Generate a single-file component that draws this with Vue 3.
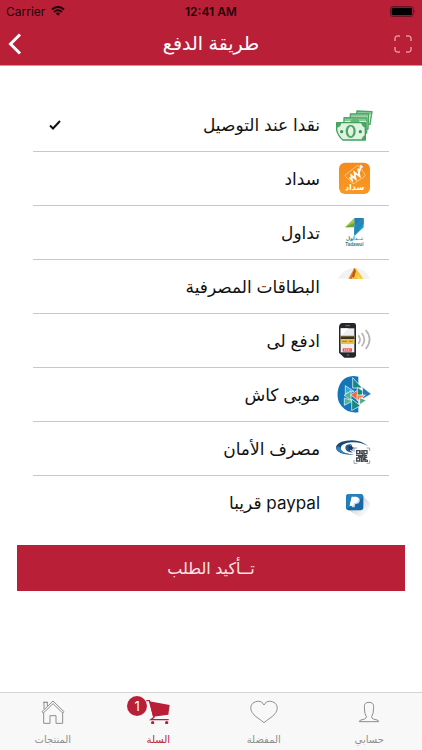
<script setup>
import { ref } from 'vue'

const methods = [
  { id: 'cash', label: 'نقدا عند التوصيل' },
  { id: 'sadad', label: 'سداد' },
  { id: 'tadawul', label: 'تداول' },
  { id: 'cards', label: 'البطاقات المصرفية' },
  { id: 'edfali', label: 'ادفع لى' },
  { id: 'mobicash', label: 'موبى كاش' },
  { id: 'aman', label: 'مصرف الأمان' },
  { id: 'paypal', label: 'paypal قريبا' },
]
const selected = ref('cash')

const tabs = [
  { id: 'account', label: 'حسابي' },
  { id: 'favourites', label: 'المفضلة' },
  { id: 'cart', label: 'السلة', badge: 1 },
  { id: 'products', label: 'المنتجات' },
]
const activeTab = ref('cart')
</script>

<template>
  <div class="screen" dir="rtl">
    <header class="header">
      <div class="status" dir="ltr">
        <span class="carrier">
          Carrier
          <svg class="wifi" viewBox="0 0 28 20" aria-hidden="true">
            <path d="M2 7Q14-3 26 7" /><path d="M6 12Q14 5 22 12" /><path class="dot" d="M9.500 15Q14 11 18.500 15L14 19.500z" />
          </svg>
        </span>
        <span class="clock">12:41 AM</span>
        <svg class="battery" viewBox="0 0 78 33" aria-hidden="true">
          <rect x="1.500" y="1.500" width="68" height="30" rx="7" fill="none" stroke="#5c1020" stroke-width="2.500" />
          <rect x="5" y="5" width="61" height="23" rx="4" fill="#000" />
          <path d="M73 12q5 4 0 9z" fill="#5c1020" />
        </svg>
      </div>
      <div class="nav">
        <button class="icon-button" type="button" aria-label="مسح">
          <svg class="scan" viewBox="0 0 18 18"><path d="M1 6V3q0-2 2-2h3M12 1h3q2 0 2 2v3M17 12v3q0 2-2 2h-3M6 17H3q-2 0-2-2v-3" /></svg>
        </button>
        <h1>طريقة الدفع</h1>
        <button class="icon-button back" type="button" aria-label="رجوع">
          <svg class="chevron" viewBox="0 0 14 22"><path d="M12 1.500 2.500 11l9.500 9.500" /></svg>
        </button>
      </div>
    </header>

    <main class="content">
      <div class="methods" role="radiogroup" aria-label="طريقة الدفع">
        <label v-for="m in methods" :key="m.id" class="method">
          <svg class="logo" viewBox="0 0 120 120" aria-hidden="true">
            <g v-if="m.id === 'cash'" stroke-linejoin="round">
              <g stroke="#4ba765" stroke-width="4" fill="#d9eedc">
                <path d="M66 18 111 20 105 58 60 56z" />
                <path d="M46 27 101 26 99 72 46 72z" />
                <path d="M27 38 96 39 95 84 26 84z" />
              </g>
              <path d="M66 18l45 2-1 8-45-1zM46 27h55v8H46zM27 38l69 1v9H27z" fill="#4ba765" opacity=".55" />
              <ellipse cx="60" cy="49" rx="13" ry="8" fill="#68b57d" />
              <path d="M5 53h86v52H24Q10 94 5 76z" fill="#e0f2e2" stroke="#42a05c" stroke-width="4" />
              <path d="M5 53h14Q18 66 5 68zM91 53H78q3 12 13 15zM91 105H79q3-12 12-14z" fill="#4ba765" />
              <ellipse cx="47" cy="79" rx="15" ry="20" fill="#4ba765" />
              <path d="M47 64q10 5 8 18l-3 9q-5 5-10 0l-3-9q-1-13 8-18" fill="#e5f3e5" />
              <circle cx="20" cy="80" r="5" fill="#389653" /><circle cx="76" cy="80" r="5" fill="#389653" />
            </g>
            <g v-else-if="m.id === 'sadad'">
              <defs><linearGradient id="orange" x2="0" y2="1"><stop stop-color="#f48b1d" /><stop offset="1" stop-color="#fb9822" /></linearGradient></defs>
              <rect x="12" y="11" width="93" height="94" rx="18" fill="url(#orange)" />
              <path d="M33 46 65 21q4-3 8 0l16 24q3 5-2 9L58 73q-5 3-8-2L31 52q-2-3 2-6z" fill="none" stroke="#ffe2b4" stroke-width="2" />
              <path d="m43 56 8 8-2-15 13 11-4-20 16 12-5-23M70 49l8-28 5 4" fill="none" stroke="#fff" stroke-width="5" />
              <text x="59" y="94" class="sadad-text">سداد</text>
            </g>
            <g v-else-if="m.id === 'tadawul'">
              <path d="M30 43 58 15v14L43 43z" fill="#a1c83b" /><path d="M30 43 58 29v14z" fill="#66a63b" />
              <path d="M58 15h28L58 43z" fill="#287dac" /><path d="M86 15v28L58 69V43z" fill="#18a1ca" /><path d="m58 43 28-28v16L58 69z" fill="#2287b9" />
              <text x="58" y="80" class="tadawul-arabic">تــداول</text>
              <text x="58" y="100" class="tadawul-latin" direction="ltr">Tadawul</text>
            </g>
            <g v-else-if="m.id === 'cards'">
              <path d="M7 35Q29 3 60 2q30 1 45 33z" fill="#f2f2f2" />
              <path d="M40 35 58 3l18 32z" fill="#dc842c" /><path d="M49 35 58 3h4l23 32z" fill="#f8c72b" />
              <path d="M50 29 58 3l5 9-7 23H46z" fill="#bb5629" /><path d="m53 30 6 5H49zM69 25l7 10h-9z" fill="#f6df6c" />
            </g>
            <g v-else-if="m.id === 'edfali'">
              <path d="M23 6h34q6 0 6 7v90q0 7-7 7H28L12 95V20Q12 6 23 6z" fill="#25262b" />
              <path d="M17 22h41v72H17z" fill="#f0eff0" /><path d="M17 22h24L17 44z" fill="#fff" />
              <path d="M17 43h41v26H17z" fill="#eabf47" /><path d="M17 46h41v8H17z" fill="#363133" />
              <path d="M21 61h15M42 61h11" stroke="#a97b26" stroke-width="3" /><path d="M23 82h28v10H23z" fill="#ed4d50" />
              <path d="M27 87h19" stroke="#fff" stroke-width="3" stroke-dasharray="4 2" /><path d="M31 14h14M35 102h8" stroke="#777" stroke-width="3" />
              <path d="M70 43q10 13 0 26M80 36q16 20 0 40M92 27q24 28 0 57" fill="none" stroke="#b7b4ad" stroke-width="5" />
            </g>
            <g v-else-if="m.id === 'mobicash'">
              <path d="M70 5v107Q39 116 20 94 5 77 8 50 15 5 54 3q9 0 16 2z" fill="#1476b9" />
              <g stroke="#fff" stroke-width="2">
                <path d="M53 8v31h29z" fill="#168a81" /><path d="M31 32v24l26-7z" fill="#31a8df" />
                <path d="m27 61 21-14v28z" fill="#4cb592" /><path d="m47 60 26-19v38z" fill="#ed6841" />
                <path d="m67 37 28 18-28 9z" fill="#168a81" /><path d="m82 36 27 21-26 15z" fill="#217bb9" />
                <path d="m66 60 25 0-24 18z" fill="#f28147" /><path d="M28 69v22l25-13z" fill="#49b990" />
                <path d="M50 72 76 92 50 107z" fill="#168a81" /><path d="M74 68v21l20-13z" fill="#4bac89" />
              </g>
            </g>
            <g v-else-if="m.id === 'aman'">
              <path d="M100 52Q73 28 34 35 2 40 3 58q5 21 55 19Q17 74 17 57 19 43 48 40q27-3 52 12z" fill="#174979" />
              <path d="M3 57q4 18 55 20Q17 74 17 57q-8-9-14 0z" fill="#3583ba" />
              <path d="M50 46q-20-2-19 12 3 13 23 13-12-6-10-13 0-8 6-12z" fill="#245b8b" /><path d="m44 52 6-4 2 6 6 3-6 3 1 6-7-4-6 2 2-7-5-4z" fill="#183c66" />
              <rect x="62" y="62" width="37" height="37" fill="#fff" />
              <g fill="none" stroke="#444850" stroke-width="4"><path d="M65 65h9v9h-9zM87 65h9v9h-9zM65 87h9v9h-9z" /><path d="M78 64v9h5v6h-8v5h9v-6h5v7h8M63 79h8v4h8v14h5v-9h6v9h7v-5M80 65h4v6M89 80h7M86 86v6h9" /></g>
              <path d="M57 68V57h10M95 57h9v9M57 93v10h10M95 103h9v-9" fill="none" stroke="#60779a" stroke-width="2" />
            </g>
            <g v-else>
              <defs><linearGradient id="shade" x2="1" y2="1"><stop offset=".3" stop-color="#c9ced3" /><stop offset=".85" stop-color="#fff" /></linearGradient></defs>
              <path d="m83 38 23 23q-3 27-31 42L38 80z" fill="url(#shade)" />
              <rect x="33" y="33" width="52" height="49" rx="9" fill="#1769a6" /><path d="M33 42q0-9 9-9h34q9 0 9 9L35 79z" fill="#277fbc" />
              <path d="M51 42h15q11 3 8 14-3 8-13 7l-2 10h-9l1-5h-7z" fill="#b9d7ef" /><path d="M50 41h14q9 3 6 12-3 8-13 7l-2 8H44z" fill="#fff" />
            </g>
          </svg>
          <span class="name">{{ m.label }}</span>
          <input v-model="selected" class="choice" type="radio" name="method" :value="m.id" />
          <svg class="tick" viewBox="0 0 12 10" aria-hidden="true"><path d="M1 5.500 4 8.500 11 1" /></svg>
        </label>
      </div>
      <button class="confirm" type="button">تــأكيد الطلب</button>
    </main>

    <nav class="tabs">
      <button v-for="t in tabs" :key="t.id" type="button" class="tab" :class="{ active: t.id === activeTab }" @click="activeTab = t.id">
        <span class="tab-icon">
          <svg viewBox="0 0 84 75" aria-hidden="true">
            <path v-if="t.id === 'account'" d="M32 48q4 5 1 9-3 4-15 6-5 1-5 5h58q0-4-5-5-12-2-15-6-3-4 1-9 3-5 3-12l1-13q0-13-14-13T28 23l1 13q0 7 3 12z" />
            <path v-else-if="t.id === 'favourites'" d="M42 18C35 3 18 5 8 13c-8 8-7 22 1 31 8 11 22 17 33 27 11-10 25-16 33-27 8-9 9-23 1-31C66 5 49 3 42 18z" />
            <g v-else-if="t.id === 'cart'">
              <path class="filled" d="M16 7 77 18 73 47 27 53z" />
              <path class="thick" d="M7 5h9l14 50-9 7h53" /><circle class="filled" cx="26" cy="71" r="5" /><circle class="filled" cx="68" cy="71" r="5" />
            </g>
            <g v-else>
              <path d="m9 38 33-32 33 32-4 4L42 14 13 42zM14 41v32h19V50h18v23h20V41M15 30V10h10v11M12 10h15" />
            </g>
          </svg>
          <span v-if="t.badge" class="badge">{{ t.badge }}</span>
        </span>
        <span class="tab-label">{{ t.label }}</span>
      </button>
    </nav>
  </div>
</template>

<style>
body {
  margin: 0;
  background: #fff;
}
</style>

<style scoped>
* {
  box-sizing: border-box;
}
.screen {
  display: flex;
  flex-direction: column;
  min-height: 100vh;
  font-family: Inter, "DejaVu Sans", sans-serif;
  color: #111;
}
button {
  border: 0;
  margin: 0;
  padding: 0;
  background: none;
  font: inherit;
  color: inherit;
}
.header {
  background: #ba1f38;
  border-bottom: 1px solid #dc8e9b;
}
.status {
  display: grid;
  grid-template-columns: 1fr auto 1fr;
  align-items: center;
  height: 22px;
  padding: 0 6px;
  font-size: 12px;
  color: #1c0408;
}
.carrier {
  display: flex;
  align-items: center;
  gap: 6px;
}
.wifi {
  width: 14px;
  height: 10px;
  fill: none;
  stroke: #1c0408;
  stroke-width: 4;
}
.wifi .dot {
  fill: #1c0408;
  stroke: none;
}
.clock {
  font-weight: 600;
}
.battery {
  justify-self: end;
  width: 26px;
  height: 11px;
}
.nav {
  display: grid;
  grid-template-columns: 40px 1fr 40px;
  align-items: center;
  height: 43px;
  color: #fff;
}
h1 {
  margin: 0;
  text-align: center;
  font-size: 19px;
  line-height: 24px;
  font-weight: 400;
}
.icon-button {
  display: flex;
  align-items: center;
  justify-content: flex-start;
  height: 40px;
  padding: 0 10px;
}
.icon-button.back {
  justify-content: flex-end;
  padding: 0 8px;
}
.scan {
  width: 18px;
  height: 18px;
  fill: none;
  stroke: #f6c9d0;
  stroke-width: 1;
}
.chevron {
  width: 14px;
  height: 22px;
  fill: none;
  stroke: #fff;
  stroke-width: 3;
}
.content {
  flex: 1;
  padding: 32px 17px 16px;
}
.methods {
  padding: 0 16px;
}
.method {
  position: relative;
  display: flex;
  align-items: center;
  height: 54px;
  padding: 0 14px 0 16px;
  border-bottom: 1px solid #c8c8c8;
}
.method:last-child {
  border-bottom-color: transparent;
}
.logo {
  flex: none;
  width: 40px;
  height: 40px;
}
.name {
  flex: 1;
  margin-right: 15px;
  font-size: 17px;
  line-height: 24px;
}
.choice {
  position: absolute;
  inset: 0;
  margin: 0;
  opacity: 0;
}
.tick {
  visibility: hidden;
  width: 12px;
  height: 10px;
  fill: none;
  stroke: #111;
  stroke-width: 2;
}
.choice:checked + .tick {
  visibility: visible;
}
.sadad-text {
  font: 700 24px "DejaVu Sans", sans-serif;
  fill: #fff;
  text-anchor: middle;
}
.tadawul-arabic {
  font: 700 15px "DejaVu Sans", sans-serif;
  fill: #2d8292;
  text-anchor: middle;
}
.tadawul-latin {
  font: 700 14px "Liberation Sans", sans-serif;
  fill: #2d8292;
  text-anchor: middle;
}
.confirm {
  display: block;
  width: 100%;
  height: 46px;
  margin-top: 15px;
  background: #ba1f38;
  color: #fbe6e9;
  font-size: 16px;
}
.tabs {
  display: grid;
  grid-template-columns: repeat(4, 1fr);
  height: 58px;
  background: #f8f8f8;
  border-top: 1px solid #d5d5d5;
}
.tab {
  display: flex;
  flex-direction: column;
  align-items: center;
  padding-top: 6px;
  color: #8e8e8e;
}
.tab.active {
  color: #ba1f38;
}
.tab-icon {
  position: relative;
  height: 25px;
}
.tab-icon svg {
  display: block;
  width: 28px;
  height: 25px;
  fill: none;
  stroke: currentColor;
  stroke-width: 3;
}
.tab-icon .filled {
  fill: currentColor;
  stroke: none;
}
.tab-icon .thick {
  stroke-width: 4;
}
.badge {
  position: absolute;
  top: -3px;
  left: -17px;
  width: 20px;
  height: 20px;
  border-radius: 50%;
  background: #ba1f38;
  color: #fff;
  font-size: 13px;
  line-height: 20px;
  text-align: center;
}
.tab-label {
  margin-top: 6px;
  font-size: 10px;
  line-height: 18px;
}
</style>
